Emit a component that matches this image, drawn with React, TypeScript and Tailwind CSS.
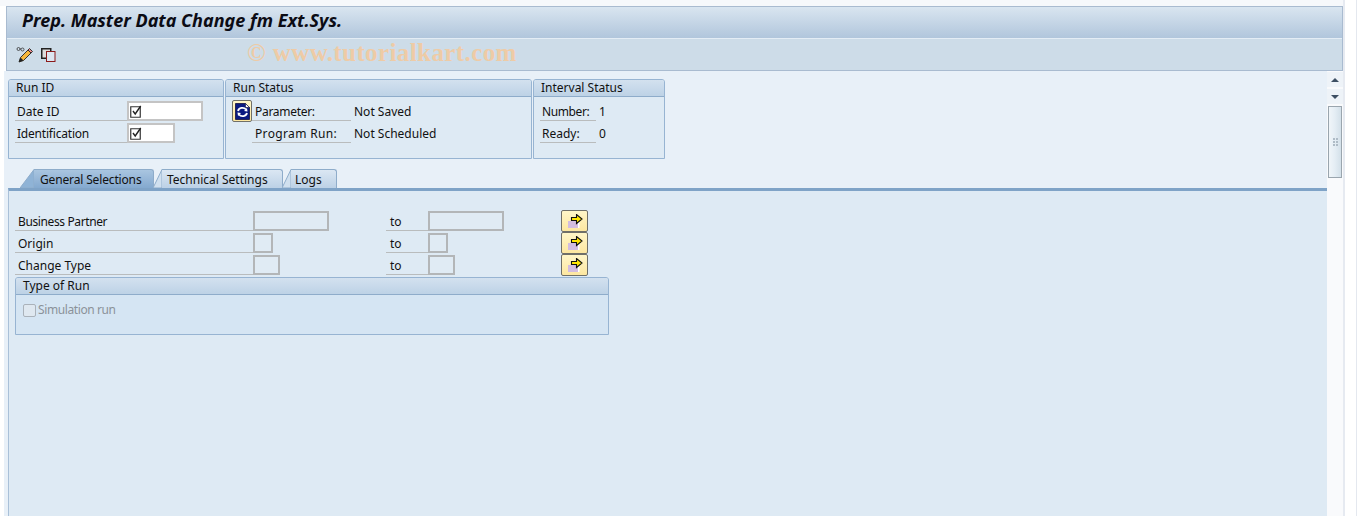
const font = "font-['Noto_Sans',sans-serif]";

function Check() {
  return (
    <svg width="13" height="13" viewBox="0 0 13 13" className="block">
      <path d="M0.75 1.75h9.5v10.5h-9.5z" fill="#fff" stroke="#333" strokeWidth="1.2" />
      <path d="M3 6l2.2 3 5.5-8" fill="none" stroke="#222" strokeWidth="1.4" />
    </svg>
  );
}

function PencilIcon() {
  return (
    <svg width="18" height="18" viewBox="0 0 18 18" className="block">
      <circle cx="2.5" cy="3" r="1.5" fill="none" stroke="#333" strokeWidth="0.8" />
      <circle cx="6.5" cy="3.5" r="1.5" fill="none" stroke="#333" strokeWidth="0.8" />
      <path d="M4 3h1" stroke="#333" strokeWidth="0.8" />
      <path d="M3 16l1.5-4.5L12 4l3 3-7.5 7.5z" fill="#f6b73c" stroke="#222" strokeWidth="0.9" />
      <path d="M12 4l1.5-1.5 3 3L15 7z" fill="#e98a8a" stroke="#222" strokeWidth="0.9" />
      <path d="M3 16l1.5-4.5 3 3z" fill="#222" />
    </svg>
  );
}

function CopyIcon() {
  return (
    <svg width="15" height="14" viewBox="0 0 15 14" className="block">
      <rect x="0.75" y="0.75" width="9" height="9.5" fill="#ddd" stroke="#222" strokeWidth="1.5" />
      <rect x="5.5" y="3.5" width="8.5" height="10" fill="#dce6f2" stroke="#8b1a1a" strokeWidth="1" />
    </svg>
  );
}

function RefreshIcon() {
  return (
    <svg width="15" height="17" viewBox="0 0 15 17" className="block">
      <path d="M0.5 0.5h10l4 4v12h-14z" fill="#0a1a80" stroke="#101040" strokeWidth="0.8" />
      <path d="M10.5 0.5l4 4h-4z" fill="#fff" stroke="#101040" strokeWidth="0.6" />
      <path d="M3 8a4.5 4 0 0 1 8-1.5" fill="none" stroke="#fff" strokeWidth="1.8" />
      <path d="M12 10a4.5 4 0 0 1-8 1.5" fill="none" stroke="#fff" strokeWidth="1.8" />
      <path d="M9 8l3.5 0.5L12 5z M6 10l-3.5-0.5L3 13z" fill="#fff" />
    </svg>
  );
}

function ArrowIcon() {
  return (
    <svg width="16" height="15" viewBox="0 0 16 15" className="block">
      <rect x="1" y="7" width="10" height="7" fill="#d2bce0" />
      <rect x="11" y="8" width="1.5" height="6" fill="#fff" />
      <path d="M4.5 3.5h5v-3l5.5 4.5-5.5 4.5v-3h-5z" fill="#ffe600" stroke="#111" strokeWidth="1.1" />
    </svg>
  );
}

function SapButton({ children, className }: { children: React.ReactNode; className: string }) {
  return (
    <div
      className={`flex items-center justify-center rounded-[2px] border border-[#6f6f68] bg-gradient-to-b from-[#fff6c8] to-[#fde7a0] ${className}`}
    >
      {children}
    </div>
  );
}

function Field({ width, check }: { width: string; check?: boolean }) {
  return (
    <div
      className={`h-[20px] shrink-0 ${width} border-2 ${
        check
          ? 'flex items-center border-[#c4c4c4] bg-white pl-[1px]'
          : 'border-[#b3b6b8] bg-[#e0ebf4]'
      }`}
    >
      {check && <Check />}
    </div>
  );
}

function Label({ text, width, className = '' }: { text: string; width: string; className?: string }) {
  return (
    <div className={`h-[20px] shrink-0 ${width} border-b border-[#b9bcbd] pl-[2px] leading-[21px] ${className}`}>
      {text}
    </div>
  );
}

function GroupBox({
  title,
  className,
  children,
}: {
  title: string;
  className: string;
  children: React.ReactNode;
}) {
  return (
    <div className={`shrink-0 rounded-t-[3px] border border-[#97b4d2] ${className}`}>
      <div className="h-[17px] rounded-t-[2px] border-b border-[#8eacca] bg-gradient-to-b from-[#d3e1ef] to-[#bdd2e6] pl-[7px] leading-[15px]">
        {title}
      </div>
      {children}
    </div>
  );
}

function Tab({
  text,
  width,
  active,
  first,
  textClass,
}: {
  text: string;
  width: string;
  active?: boolean;
  first?: boolean;
  textClass: string;
}) {
  const slant = first ? 14 : 9;
  return (
    <div className={`flex h-[19px] shrink-0 ${first ? '' : '-ml-[1px]'}`}>
      <svg width={slant} height="19" viewBox={`0 0 ${slant} 19`} className="block">
        <path
          d={`M0 19L${slant} 0.5V19z`}
          fill={active ? '#8fb3d6' : '#d0e0ef'}
          stroke="#8eacca"
          strokeWidth="1"
        />
      </svg>
      <div
        className={`${width} ${textClass} rounded-tr-[3px] border-t border-r border-[#8eacca] leading-[19px] ${
          active ? 'bg-gradient-to-b from-[#a9c5e0] to-[#84a9cf]' : 'bg-gradient-to-b from-[#dbe7f3] to-[#bcd1e6]'
        }`}
      >
        {text}
      </div>
    </div>
  );
}

const rows = [
  { label: 'Business Partner', width: 'w-[76px]', spacer: 'w-[57px]', button: 'ml-[57px]', tracking: 'tracking-[-0.38px]' },
  { label: 'Origin', width: 'w-[20px]', spacer: 'w-[113px]', button: 'ml-[113px]', tracking: '' },
  { label: 'Change Type', width: 'w-[27px]', spacer: 'w-[106px]', button: 'ml-[106px]', tracking: '' },
];

export default function App() {
  return (
    <div className={`${font} flex h-[516px] w-[1357px] overflow-hidden bg-white text-[12px] text-[#111]`}>
      <div className="flex w-[1343px] shrink-0 flex-col">
        <div className="h-[6px] shrink-0 bg-[#f6f8fb]" />
        <div className="ml-[6px] w-[1337px] shrink-0 border-l border-r border-[#a9bbd0]">
          <div className="h-[32px] border-t border-[#a9bbd0] bg-gradient-to-b from-[#d9e5f0] to-[#b1c6dc] pl-[15px] text-[18px] font-bold italic leading-[27px] text-[#0b0b14]">
            Prep. Master Data Change fm Ext.Sys.
          </div>
          <div className="flex h-[33px] items-center border-t border-b border-t-[#e4edf5] border-b-[#a9bbd0] bg-[#cddce8] pl-[9px]">
            <PencilIcon />
            <div className="ml-[7px]">
              <CopyIcon />
            </div>
            <div className="-mt-[4px] ml-[191px] font-['Liberation_Serif',serif] text-[25px] font-bold leading-none tracking-[0.4px] text-[#eecba6]">
              © www.tutorialkart.com
            </div>
          </div>
        </div>

        <div className="ml-[4px] flex min-h-0 flex-1">
          <div className="flex w-[1323px] flex-col bg-[#e8f0f8] pl-[4px]">
            <div className="mt-[8px] flex h-[81px] shrink-0 gap-[1px]">
              <GroupBox title="Run ID" className="h-[80px] w-[216px] bg-[#deeaf4]">
                <div className="flex h-[22px] items-start pl-[6px] pt-[4px]">
                  <Label text="Date ID" width="w-[112px]" />
                  <Field width="w-[76px]" check />
                </div>
                <div className="mt-[4px] flex h-[22px] items-start pl-[6px]">
                  <Label text="Identification" width="w-[112px]" className="tracking-[-0.2px]" />
                  <Field width="w-[48px]" check />
                </div>
              </GroupBox>
              <GroupBox title="Run Status" className="h-[80px] w-[307px] bg-[#deeaf4]">
                <div className="flex h-[22px] items-start pl-[6px] pt-[4px]">
                  <SapButton className="-mt-[1px] h-[22px] w-[20px] shrink-0">
                    <RefreshIcon />
                  </SapButton>
                  <Label text="Parameter:" width="w-[99px]" className="!pl-[3px] tracking-[-0.3px]" />
                  <div className="pl-[3px] leading-[21px]">Not Saved</div>
                </div>
                <div className="mt-[4px] flex h-[22px] items-start pl-[26px]">
                  <Label text="Program Run:" width="w-[99px]" className="!pl-[3px] tracking-[0.35px]" />
                  <div className="pl-[3px] leading-[21px]">Not Scheduled</div>
                </div>
              </GroupBox>
              <GroupBox title="Interval Status" className="h-[80px] w-[132px] bg-[#deeaf4]">
                <div className="flex h-[22px] items-start pl-[6px] pt-[4px]">
                  <Label text="Number:" width="w-[56px]" className="tracking-[-0.4px]" />
                  <div className="pl-[3px] leading-[21px]">1</div>
                </div>
                <div className="mt-[4px] flex h-[22px] items-start pl-[6px]">
                  <Label text="Ready:" width="w-[56px]" />
                  <div className="pl-[3px] leading-[21px]">0</div>
                </div>
              </GroupBox>
            </div>

            <div className="mt-[9px] flex h-[19px] shrink-0 pl-[12px]">
              <Tab text="General Selections" width="w-[120px]" textClass="pl-[6px] tracking-[-0.15px]" active first />
              <Tab text="Technical Settings" width="w-[121px]" textClass="pl-[5px]" />
              <Tab text="Logs" width="w-[46px]" textClass="pl-[4px]" />
            </div>

            <div className="flex w-[1319px] min-h-0 flex-1 flex-col border-t-[3px] border-l border-t-[#7fa3c7] border-l-[#a9c0d8] bg-[#deeaf4] pl-[6px] pt-[20px]">
              {rows.map((r) => (
                <div key={r.label} className="flex h-[22px] shrink-0 items-start">
                  <Label text={r.label} width="w-[238px]" className={`!pl-[3px] ${r.tracking}`} />
                  <Field width={r.width} />
                  <div className={`${r.spacer} shrink-0`} />
                  <Label text="to" width="w-[42px]" className="!pl-[4px]" />
                  <Field width={r.width} />
                  <SapButton className={`${r.button} -mt-[1px] h-[22px] w-[27px] shrink-0`}>
                    <ArrowIcon />
                  </SapButton>
                </div>
              ))}
              <div>
                <GroupBox title="Type of Run" className="h-[58px] w-[594px] bg-[#d5e5f3]">
                  <div className="flex items-center pl-[7px] pt-[7px] text-[#8b9299]">
                    <div className="h-[13px] w-[13px] rounded-[2px] border border-[#aab2ba] bg-[#dfe8f0]" />
                    <span className="ml-[2px] leading-[16px] tracking-[-0.4px]">Simulation run</span>
                  </div>
                </GroupBox>
              </div>
            </div>
          </div>

          <div className="flex w-[16px] shrink-0 flex-col bg-[#f9fafc] pt-[1px]">
            <div className="flex h-[15px] items-center justify-center bg-[#eef3f8]">
              <div className="h-0 w-0 border-x-[4px] border-b-[4px] border-x-transparent border-b-[#3d4f63]" />
            </div>
            <div className="mt-[2px] flex h-[15px] items-center justify-center bg-[#eef3f8]">
              <div className="h-0 w-0 border-x-[4px] border-t-[4px] border-x-transparent border-t-[#3d4f63]" />
            </div>
            <div className="ml-[1px] mt-[2px] flex h-[72px] w-[14px] items-center justify-center border border-[#9aa5ae] bg-gradient-to-r from-[#f0f5f9] via-[#e4edf4] to-[#d3e0e9]">
              <div className="grid grid-cols-2 gap-[1px]">
                {[0, 1, 2, 3, 4, 5].map((i) => (
                  <div key={i} className="h-[2px] w-[2px] bg-[#aebbc6]" />
                ))}
              </div>
            </div>
          </div>
        </div>
      </div>
      <div className="w-[14px] shrink-0 border-l-2 border-r border-l-[#e6eaf1] border-r-[#e4e8ef]" />
    </div>
  );
}
